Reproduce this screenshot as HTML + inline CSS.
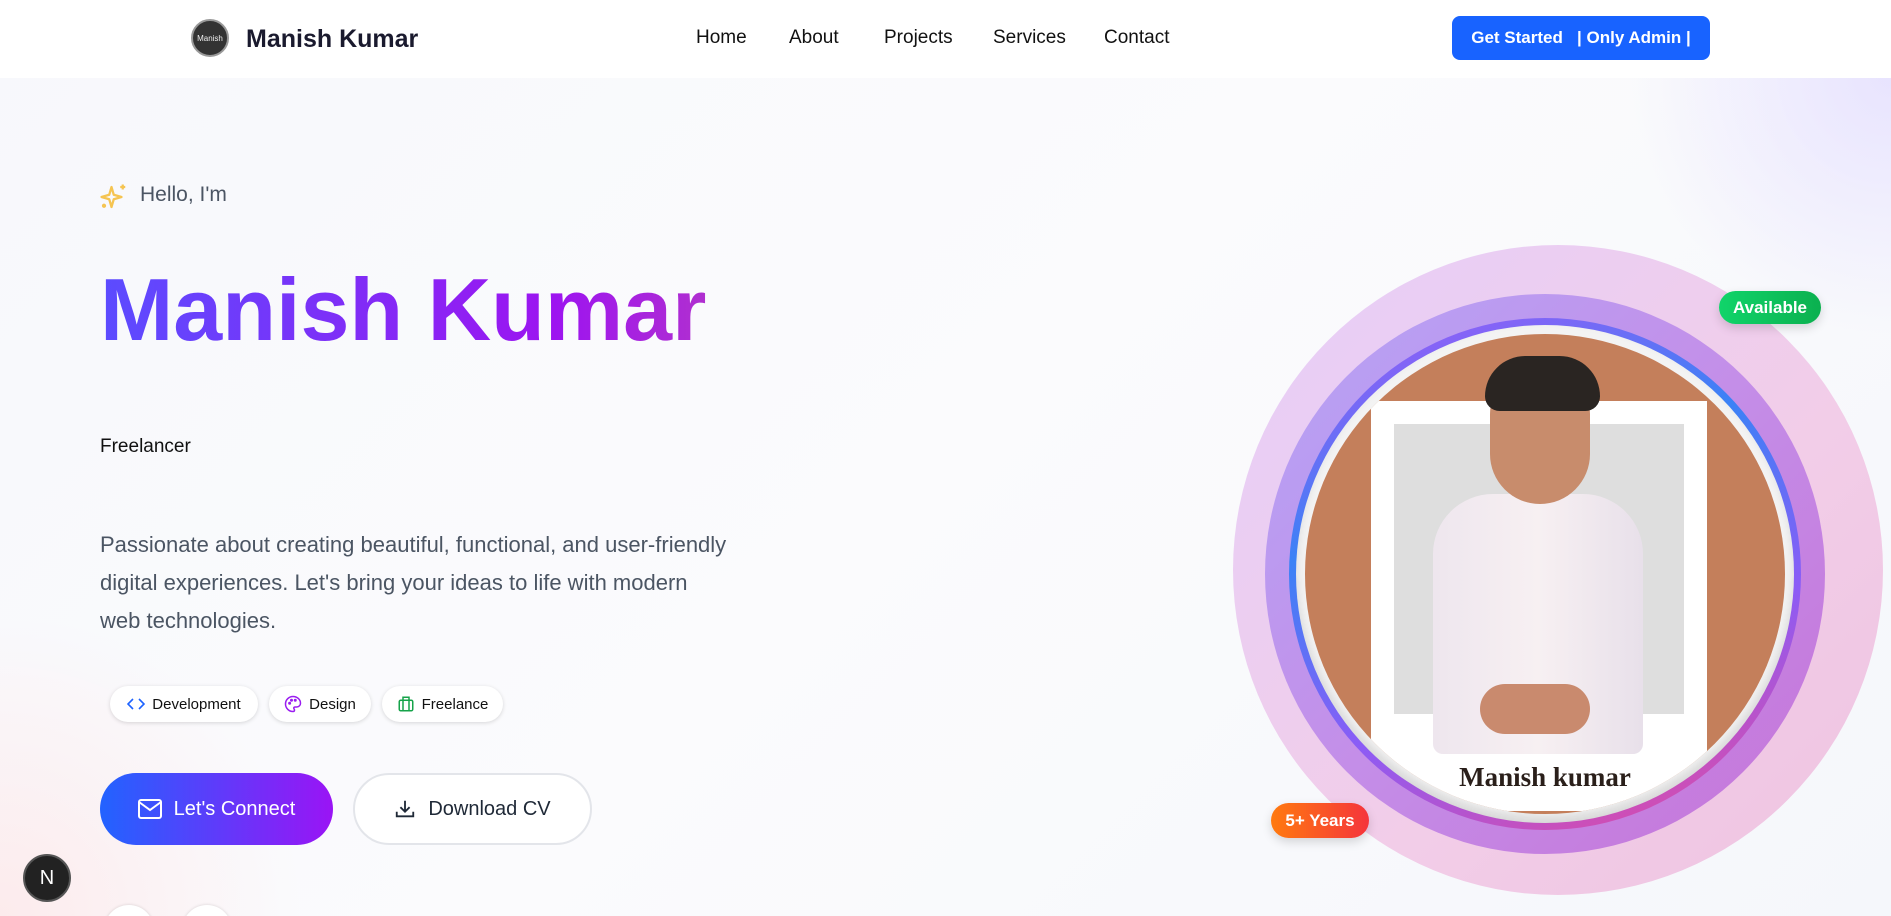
<!DOCTYPE html>
<html><head><meta charset="utf-8"><style>
*{margin:0;padding:0;box-sizing:border-box}
html,body{width:1891px;height:916px;overflow:hidden}
body{font-family:"Liberation Sans",sans-serif;background:#f8f9fc}
#root{position:relative;width:1891px;height:916px;overflow:hidden}
.bg{position:absolute;inset:0;background:radial-gradient(circle at 0% 100%,rgba(255,220,220,.5),transparent 300px),radial-gradient(circle at 100% 8%,rgba(230,225,255,.9),transparent 260px),linear-gradient(135deg,#f7f8fc,#fbfbfd 50%,#f5f7fb)}
nav{position:absolute;left:0;top:0;width:1891px;height:78px;background:#fff}
.abs{position:absolute}
.link{position:absolute;top:27px;font-size:19px;color:#111}
.chip{position:absolute;top:686px;height:36px;border-radius:18px;background:#fff;box-shadow:0 1px 4px rgba(0,0,0,.15);font-size:15px;color:#111;display:flex;align-items:center;justify-content:center;gap:7px}
.ring{position:absolute;border-radius:50%}
</style></head><body><div id="root">
<div class="bg"></div>
<nav>
<div class="abs" style="left:191px;top:19px;width:38px;height:38px;border-radius:50%;background:#333;border:2px solid #999;color:#eee;font-size:8px;display:flex;align-items:center;justify-content:center">Manish</div>
<div class="abs" style="left:246px;top:25px;font-size:25px;font-weight:bold;color:#1a1a2e">Manish Kumar</div>
<div class="link" style="left:696px">Home</div>
<div class="link" style="left:789px">About</div>
<div class="link" style="left:884px">Projects</div>
<div class="link" style="left:993px">Services</div>
<div class="link" style="left:1104px">Contact</div>
<div class="abs" style="left:1452px;top:16px;width:258px;height:44px;border-radius:8px;background:#1863ff;color:#fff;font-size:17px;font-weight:bold;display:flex;align-items:center;justify-content:center;white-space:pre">Get Started   | Only Admin |</div>
</nav>

<svg class="abs" style="left:99px;top:182px" width="30" height="30" viewBox="0 0 24 24" fill="none" stroke="#f5c451" stroke-width="1.8" stroke-linejoin="round"><path d="M10 4 L11.8 10.2 L18 12 L11.8 13.8 L10 20 L8.2 13.8 L2 12 L8.2 10.2Z"/><path d="M19 2v4M17 4h4"/><circle cx="4" cy="19" r=".8"/></svg>
<div class="abs" style="left:140px;top:183px;font-size:21px;color:#4b5563">Hello, I'm</div>
<div class="abs" style="left:100px;top:262px;font-size:88px;font-weight:bold;background:linear-gradient(90deg,#5b4cff,#9d14f0 75%,#b02fd0);-webkit-background-clip:text;background-clip:text;color:transparent;line-height:1.1">Manish Kumar</div>
<div class="abs" style="left:100px;top:436px;font-size:19px;color:#111">Freelancer</div>
<div class="abs" style="left:100px;top:526px;width:630px;font-size:22px;line-height:38px;color:#4b5563">Passionate about creating beautiful, functional, and user-friendly digital experiences. Let's bring your ideas to life with modern web technologies.</div>

<div class="chip" style="left:110px;width:148px"><svg width="18" height="14" viewBox="0 0 18 14" fill="none" stroke="#1d63ff" stroke-width="1.6"><path d="M6 2 1 7l5 5M12 2l5 5-5 5"/></svg>Development</div>
<div class="chip" style="left:269px;width:102px"><svg width="18" height="18" viewBox="0 0 24 24" fill="none" stroke="#9a1df0" stroke-width="2"><path d="M12 2a10 10 0 1 0 0 20c1.5 0 2-1 2-2s-1-1.5-1-2.5 1-1.5 2-1.5h2a5 5 0 0 0 5-5C22 6 17.5 2 12 2z"/><circle cx="7.5" cy="11" r="1"/><circle cx="10" cy="7" r="1"/><circle cx="15" cy="7" r="1"/></svg>Design</div>
<div class="chip" style="left:382px;width:121px"><svg width="18" height="18" viewBox="0 0 24 24" fill="none" stroke="#16a34a" stroke-width="2"><rect x="3" y="7" width="18" height="14" rx="2"/><path d="M8 7V3h8v4M8 7v14M16 7v14"/></svg>Freelance</div>

<div class="abs" style="left:100px;top:773px;width:233px;height:72px;border-radius:36px;background:linear-gradient(90deg,#2263ff,#9a14f5);color:#fff;font-size:20px;display:flex;align-items:center;justify-content:center;gap:12px"><svg width="24" height="20" viewBox="0 0 24 20" fill="none" stroke="#fff" stroke-width="2"><rect x="1" y="1" width="22" height="18" rx="2"/><path d="M1 3l11 8 11-8"/></svg>Let's Connect</div>
<div class="abs" style="left:353px;top:773px;width:239px;height:72px;border-radius:36px;background:#fff;border:2px solid #e3e5ea;color:#1f2937;font-size:20px;display:flex;align-items:center;justify-content:center;gap:12px"><svg width="22" height="22" viewBox="0 0 24 24" fill="none" stroke="#1f2937" stroke-width="2"><path d="M12 3v12M7 10l5 5 5-5M3 15v5h18v-5"/></svg>Download CV</div>

<div class="abs" style="left:23px;top:854px;width:48px;height:48px;border-radius:50%;background:#222;border:2px solid #555;color:#fff;font-size:20px;display:flex;align-items:center;justify-content:center">N</div>
<div class="abs" style="left:104px;top:905px;width:50px;height:50px;border-radius:50%;background:#fff;box-shadow:0 0 3px rgba(0,0,0,.15)"></div>
<div class="abs" style="left:182px;top:905px;width:50px;height:50px;border-radius:50%;background:#fff;box-shadow:0 0 3px rgba(0,0,0,.15)"></div>

<div class="ring" style="left:1233px;top:245px;width:650px;height:650px;background:linear-gradient(135deg,#e6cff9,#f2cde8 60%,#eec3e0)"></div>
<div class="ring" style="left:1265px;top:294px;width:560px;height:560px;background:linear-gradient(135deg,#b4a5f7,#c48ee8 50%,#c673d8)"></div>
<div class="ring" style="left:1289px;top:318px;width:512px;height:512px;background:linear-gradient(160deg,#a855f7,#3b82f6 35%,#8b5cf6 65%,#ec4899)"></div>
<div class="ring" style="left:1296px;top:325px;width:498px;height:498px;background:#f3f3f3;box-shadow:inset 0 -6px 10px rgba(0,0,0,.12)"></div>
<div class="ring" style="left:1305px;top:334px;width:480px;height:480px;background:#c47f5b;overflow:hidden">
 <div class="abs" style="left:66px;top:67px;width:336px;height:410px;background:#fff"></div>
 <div class="abs" style="left:89px;top:90px;width:290px;height:290px;background:#dedede"></div>
 <div class="abs" style="left:128px;top:160px;width:210px;height:260px;border-radius:60px 60px 10px 10px;background:linear-gradient(90deg,#eee6ee,#f7f0f2,#e8e0ea)"></div>
 <div class="abs" style="left:185px;top:35px;width:100px;height:135px;border-radius:45px 45px 50px 50px;background:#c88c6c"></div>
 <div class="abs" style="left:180px;top:22px;width:115px;height:55px;border-radius:55px 55px 20px 20px;background:#2a2522"></div>
 <div class="abs" style="left:175px;top:350px;width:110px;height:50px;border-radius:30px;background:#c98a6e"></div>
 <div class="abs" style="left:0;top:428px;width:480px;text-align:center;font-family:'Liberation Serif',serif;font-weight:bold;font-size:27px;color:#2a1f1a">Manish kumar</div>
</div>
<div class="abs" style="left:1719px;top:291px;width:102px;height:33px;border-radius:17px;background:linear-gradient(90deg,#10d46a,#0bb04f);color:#fff;font-size:17px;font-weight:bold;display:flex;align-items:center;justify-content:center;box-shadow:0 4px 10px rgba(0,0,0,.15)">Available</div>
<div class="abs" style="left:1271px;top:803px;width:98px;height:35px;border-radius:18px;background:linear-gradient(90deg,#ff7a0f,#f5343c);color:#fff;font-size:17px;font-weight:bold;display:flex;align-items:center;justify-content:center;box-shadow:0 4px 10px rgba(0,0,0,.15)">5+ Years</div>
</div></body></html>
